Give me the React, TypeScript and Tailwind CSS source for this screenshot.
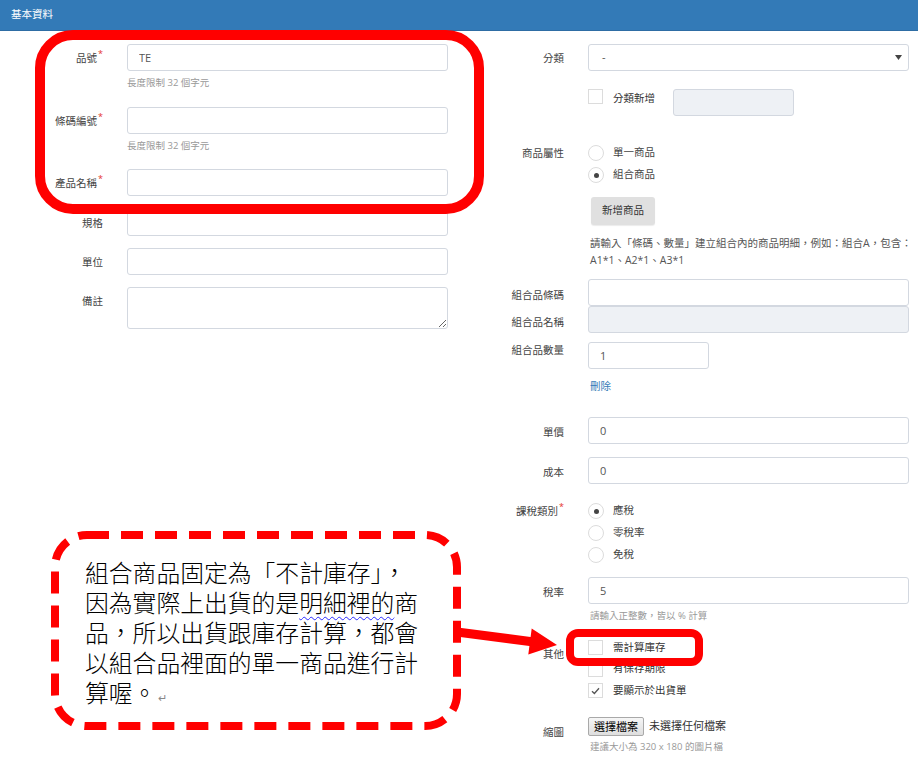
import React from 'react';

const Star: React.FC = () => (
    <span className="relative -top-[5px] ml-[1px] text-[9px] text-[#e5332a]">*</span>
);

const Label: React.FC<{ text: string; req?: boolean; className?: string }> = ({ text, req, className = '' }) => (
    <div className={`w-[103px] shrink-0 text-right whitespace-nowrap ${className}`}>
        {text}
        {req && <Star />}
    </div>
);

const Input: React.FC<{ value?: string; width?: string; disabled?: boolean }> = ({ value = '', width = 'w-[321px]', disabled }) => (
    <input
        readOnly
        defaultValue={value}
        className={`${width} h-[27px] border border-[#d3d8e0] rounded-[3px] px-[11px] text-[11px] text-[#555] outline-none ${disabled ? 'bg-[#eef1f5]' : 'bg-white'}`}
    />
);

const Help: React.FC<{ children: React.ReactNode; className?: string }> = ({ children, className = '' }) => (
    <div className={`text-[9.5px] leading-[14px] text-[#999] ${className}`}>{children}</div>
);

const Radio: React.FC<{ label: string; checked?: boolean }> = ({ label, checked }) => (
    <div className="flex items-center h-[22px]">
        <span className="w-[16px] h-[16px] rounded-full border border-[#dcdcdc] bg-white flex items-center justify-center">
            {checked && <span className="w-[5px] h-[5px] rounded-full bg-[#444]" />}
        </span>
        <span className="ml-[9px] text-[10.5px] text-[#444]">{label}</span>
    </div>
);

const Check: React.FC<{ label: string; checked?: boolean }> = ({ label, checked }) => (
    <div className="flex items-center h-[21.5px]">
        <span className="w-[15px] h-[15px] border border-[#dcdcdc] bg-white flex items-center justify-center">
            {checked && (
                <svg width="9" height="8" viewBox="0 0 9 8">
                    <path d="M1 4.2 L3.4 6.5 L8 1.2" fill="none" stroke="#555" strokeWidth="1.3" />
                </svg>
            )}
        </span>
        <span className="ml-[10px] text-[10.5px] text-[#333]">{label}</span>
    </div>
);

const bubbleLines: React.ReactNode[] = [
    '組合商品固定為「不計庫存」，',
    <>因為實際上出貨的是<span className="underline decoration-wavy decoration-[#2a2aff] decoration-1 underline-offset-[4px]">明細裡的</span>商</>,
    '品，所以出貨跟庫存計算，都會',
    '以組合品裡面的單一商品進行計',
    <>算喔。<span className="text-[11px] text-[#888] ml-[2px]">↵</span></>,
];

const App: React.FC = () => {
    return (
        <div className="relative w-[918px] h-[761px] overflow-hidden bg-white text-[10.5px] text-[#444] font-['Open_Sans','Noto_Sans_CJK_TC',sans-serif]">
            {/* Header */}
            <div className="h-[31px] bg-[#337ab7] border-b border-[#2e6da4] px-[11px] flex items-center text-white text-[10.5px]">
                基本資料
            </div>

            <div className="flex">
                {/* Left column */}
                <div className="w-[461px] shrink-0">
                    <div className="flex mt-[13px]">
                        <Label text="品號" req className="pt-[6px] leading-[16px]" />
                        <div className="ml-[24px]">
                            <Input value="TE" />
                            <Help className="mt-[5px]">長度限制 32 個字元</Help>
                        </div>
                    </div>
                    <div className="flex mt-[17px]">
                        <Label text="條碼編號" req className="pt-[6px] leading-[16px]" />
                        <div className="ml-[24px]">
                            <Input />
                            <Help className="mt-[5px]">長度限制 32 個字元</Help>
                        </div>
                    </div>
                    <div className="flex mt-[16px]">
                        <Label text="產品名稱" req className="pt-[6px] leading-[16px]" />
                        <div className="ml-[24px]"><Input /></div>
                    </div>
                    <div className="flex mt-[13px]">
                        <Label text="規格" className="pt-[6px] leading-[16px]" />
                        <div className="ml-[24px]"><Input /></div>
                    </div>
                    <div className="flex mt-[12px]">
                        <Label text="單位" className="pt-[6px] leading-[16px]" />
                        <div className="ml-[24px]"><Input /></div>
                    </div>
                    <div className="flex mt-[12px]">
                        <Label text="備註" className="pt-[6px] leading-[16px]" />
                        <div className="ml-[24px] flex">
                            <textarea
                                readOnly
                                className="w-[321px] h-[42px] border border-[#d3d8e0] rounded-[3px] outline-none block"
                            />
                        </div>
                    </div>
                </div>

                {/* Right column */}
                <div className="w-[457px] shrink-0">
                    <div className="flex mt-[13px]">
                        <Label text="分類" className="pt-[6px] leading-[16px]" />
                        <div className="ml-[24px] w-[321px] h-[27px] border border-[#d3d8e0] rounded-[3px] flex items-center justify-between pl-[13px] pr-[6px] text-[11px] text-[#555]">
                            <span>-</span>
                            <svg width="7" height="5" viewBox="0 0 7 5">
                                <polygon points="0,0 7,0 3.5,5" fill="#444" />
                            </svg>
                        </div>
                    </div>
                    <div className="flex mt-[18px] ml-[127px] items-start">
                        <span className="w-[15px] h-[15px] border border-[#dcdcdc] bg-white shrink-0" />
                        <span className="ml-[10px] mt-[1px] leading-[16px] text-[#333]">分類新增</span>
                        <div className="ml-[18px]"><Input width="w-[121px]" disabled /></div>
                    </div>
                    <div className="flex mt-[26px]">
                        <Label text="商品屬性" className="leading-[22px]" />
                        <div className="ml-[24px]">
                            <Radio label="單一商品" />
                            <Radio label="組合商品" checked />
                        </div>
                    </div>
                    <div className="ml-[130px] mt-[11px]">
                        <button className="w-[64px] h-[28px] bg-[#e0e0e0] rounded-[3px] text-[10.5px] text-[#333] shadow-[0_1px_1px_rgba(0,0,0,0.08)]">
                            新增商品
                        </button>
                    </div>
                    <div className="ml-[129px] mt-[10px] leading-[17px] text-[10.5px] text-[#555] whitespace-nowrap">
                        請輸入「條碼、數量」建立組合內的商品明細，例如：組合A，包含：<br />
                        A1*1、A2*1、A3*1
                    </div>
                    <div className="flex mt-[10px]">
                        <Label text="組合品條碼" className="pt-[8px] leading-[16px]" />
                        <div className="ml-[24px]"><Input /></div>
                    </div>
                    <div className="flex">
                        <Label text="組合品名稱" className="pt-[8px] leading-[16px]" />
                        <div className="ml-[24px]"><Input disabled /></div>
                    </div>
                    <div className="flex mt-[9px]">
                        <Label text="組合品數量" className="leading-[16px]" />
                        <div className="ml-[24px]"><Input value="1" width="w-[121px]" /></div>
                    </div>
                    <div className="ml-[129px] mt-[9px] leading-[16px] text-[#337ab7]">刪除</div>
                    <div className="flex mt-[23px]">
                        <Label text="單價" className="pt-[7px] leading-[16px]" />
                        <div className="ml-[24px]"><Input value="0" /></div>
                    </div>
                    <div className="flex mt-[13px]">
                        <Label text="成本" className="pt-[7px] leading-[16px]" />
                        <div className="ml-[24px]"><Input value="0" /></div>
                    </div>
                    <div className="flex mt-[16px]">
                        <Label text="課稅類別" req className="leading-[22px]" />
                        <div className="ml-[24px]">
                            <Radio label="應稅" checked />
                            <Radio label="零稅率" />
                            <Radio label="免稅" />
                        </div>
                    </div>
                    <div className="flex mt-[11px]">
                        <Label text="稅率" className="pt-[7px] leading-[16px]" />
                        <div className="ml-[24px]">
                            <Input value="5" />
                            <Help className="mt-[5px] ml-[2px]">請輸入正整數，皆以 % 計算</Help>
                        </div>
                    </div>
                    <div className="flex mt-[14px]">
                        <Label text="其他" className="pt-[6px] leading-[22px]" />
                        <div className="ml-[24px]">
                            <Check label="需計算庫存" />
                            <Check label="有保存期限" />
                            <Check label="要顯示於出貨單" checked />
                        </div>
                    </div>
                    <div className="flex mt-[15px]">
                        <Label text="縮圖" className="pt-[7px] leading-[16px]" />
                        <div className="ml-[24px]">
                            <div className="flex items-center">
                                <button className="h-[19px] px-[5px] border border-[#a9a9a9] rounded-[2px] bg-gradient-to-b from-[#f6f6f6] to-[#dedede] text-[11px] text-black leading-none">
                                    選擇檔案
                                </button>
                                <span className="ml-[5px] text-[11px] text-[#333]">未選擇任何檔案</span>
                            </div>
                            <Help className="mt-[4px] ml-[2px]">建議大小為 320 x 180 的圖片檔</Help>
                        </div>
                    </div>
                </div>
            </div>

            {/* Annotation: red frame round top-left fields */}
            <div className="absolute left-[35px] top-[30px] w-[449px] h-[184px] border-[10px] border-[#ff0000] rounded-[38px]" />

            {/* Annotation: red frame round 需計算庫存 */}
            <div className="absolute left-[566px] top-[629px] w-[137px] h-[37px] border-[8px] border-[#ff0000] rounded-[12px]" />

            {/* Annotation: dashed bubble and arrow */}
            <svg className="absolute left-0 top-0" width="918" height="761" viewBox="0 0 918 761">
                <rect x="55" y="535" width="402" height="191" rx="32" fill="white" stroke="#ff0000" strokeWidth="8" strokeDasharray="22 12" />
                <polygon points="457.6,627.5 530.6,637 531.7,628.6 557,645 528.3,654.4 529.4,646 456.4,636.5" fill="#ff0000" />
            </svg>
            <div className="absolute left-[85px] top-[557px] text-[23.8px] font-light text-black font-['Noto_Sans_CJK_TC','Noto_Sans',sans-serif] whitespace-nowrap">
                {bubbleLines.map((line, i) => (
                    <div key={i} className="h-[30px] leading-[30px]">{line}</div>
                ))}
            </div>
        </div>
    );
};

export default App;
